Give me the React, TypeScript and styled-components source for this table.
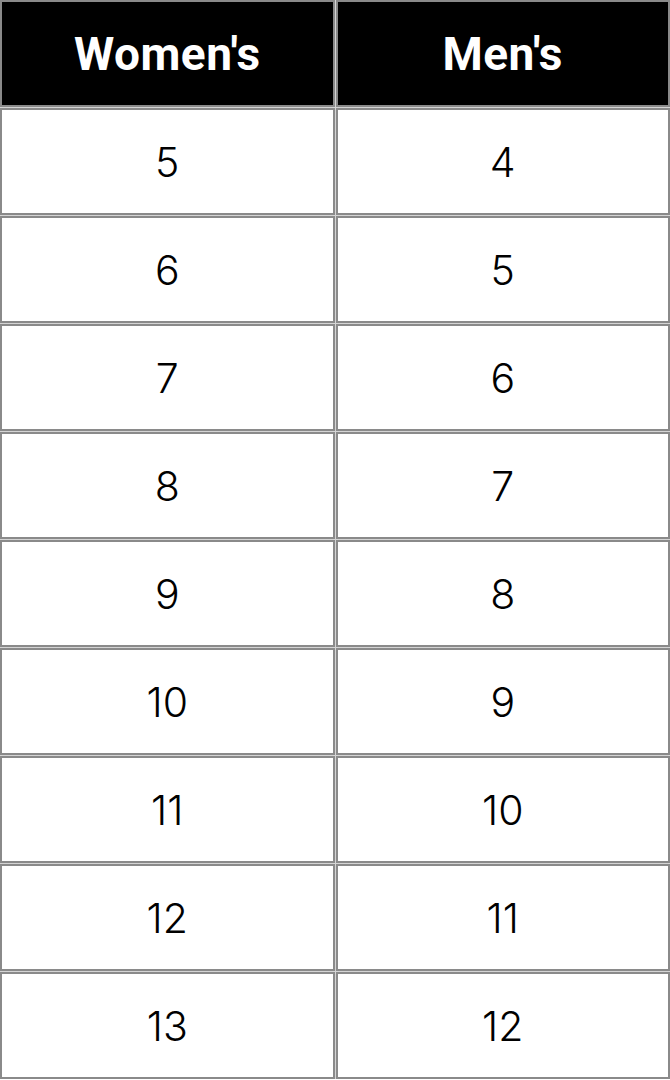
import React from "react";
import { createGlobalStyle, styled } from "styled-components";

const GlobalStyle = createGlobalStyle`
  body {
    margin: 0;
    background: #ffffff;
  }
`;

const Chart = styled.div`
  display: grid;
  grid-template-columns: repeat(2, 1fr);
  grid-auto-rows: 107px;
  gap: 1px;
  width: 670px;
  background: #d4d4d4;
`;

const Cell = styled.div<{ $head?: boolean }>`
  display: flex;
  align-items: center;
  justify-content: center;
  border: 2px solid #8a8a8a;
  background: ${props => (props.$head ? "#000000" : "#ffffff")};
  color: ${props => (props.$head ? "#ffffff" : "#000000")};
  font-family: ${props => (props.$head ? "Roboto, \"Liberation Sans\", sans-serif" : "Inter, \"Noto Sans\", sans-serif")};
  font-size: ${props => (props.$head ? "46px" : "41px")};
  font-weight: ${props => (props.$head ? 700 : 300)};
  letter-spacing: ${props => (props.$head ? "0.5px" : "0")};
`;

const sizes = [
  [5, 4],
  [6, 5],
  [7, 6],
  [8, 7],
  [9, 8],
  [10, 9],
  [11, 10],
  [12, 11],
  [13, 12],
];

export default function App() {
  return (
    <>
      <GlobalStyle />
      <Chart>
        <Cell $head>Women's</Cell>
        <Cell $head>Men's</Cell>
        {sizes.map(([w, m]) => (
          <React.Fragment key={w}>
            <Cell>{w}</Cell>
            <Cell>{m}</Cell>
          </React.Fragment>
        ))}
      </Chart>
    </>
  );
}
